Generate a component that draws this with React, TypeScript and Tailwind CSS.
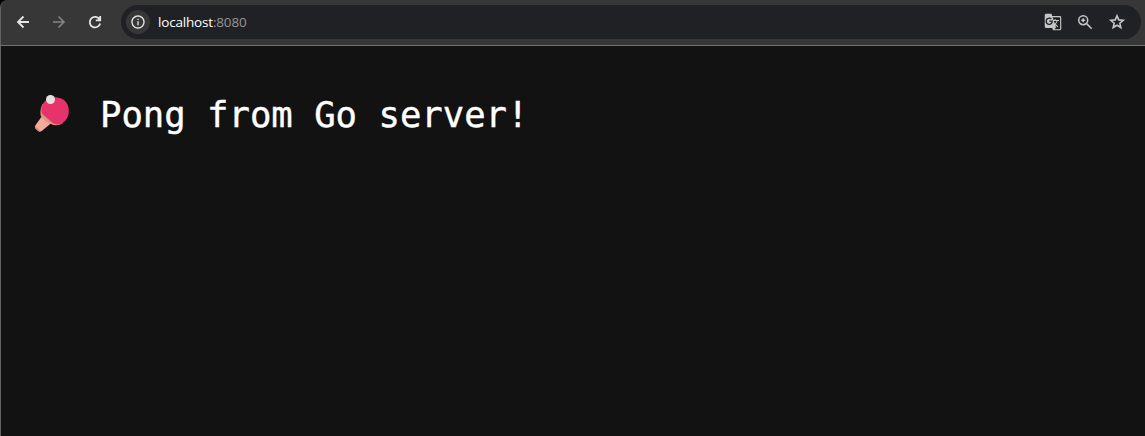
import React from "react";
import { MdGTranslate, MdOutlineInfo } from "react-icons/md";

function Icon({ d, className }: { d: string; className: string }) {
  return (
    <svg viewBox="0 0 18 18" className={`size-[18px] fill-none stroke-current ${className}`} aria-hidden="true">
      <path d={d} />
    </svg>
  );
}

function Paddle() {
  return (
    <svg viewBox="0 0 36 38" className="h-[38px] w-9 shrink-0" aria-hidden="true">
      <path d="M9.500 20 L18 28.500 L8 36.700 Q5.500 38.500 3.500 36.600 L1.500 34.500 Q0 32.500 2 30.500 Z" fill="#f5aa9b" />
      <path d="M1.300 32 L6.800 37.300 Q5 38.300 3.500 36.600 L1.500 34.500 Q0.700 33 1.300 32Z" fill="#cf8f7d" />
      <path d="M8.500 10 Q5.500 16 6.800 22 Q11 28 17 30 Q23 33 29 29 L14 13Z" fill="#dc9683" />
      <path d="M9.500 9 C13 3 23 1 30 6 C36.500 11 36 22 31 27 C26.500 32 20.500 31 17.500 28 L8.800 20.500 C6.500 18 7 13 9.500 9Z" fill="#e7336b" />
      <circle cx="16.500" cy="5.500" r="4.500" fill="#e4e1e3" />
    </svg>
  );
}

export default function App() {
  return (
    <div className="flex h-screen flex-col overflow-hidden bg-black">
      <header className="flex h-[46px] shrink-0 items-center rounded-tl-lg border-b border-l border-[#727272] border-l-[#626262] bg-[#373737] pr-1">
        <nav className="mb-px flex w-[120px] items-center gap-[18px] pl-[13px]">
          <button aria-label="Back"><Icon d="M15 9H4.500M9.500 3.500 4 9l5.500 5.500" className="stroke-[1.800] text-[#e6e6e6]" /></button>
          <button aria-label="Forward"><Icon d="M3 9h10.500M8.500 3.500 14 9l-5.500 5.500" className="stroke-[1.700] text-[#828282]" /></button>
          <button aria-label="Reload"><Icon d="M13.700 6.500A5.300 5.300 0 1 0 14.200 10.500M14.200 3v4.300H9.800" className="stroke-[1.800] text-[#e6e6e6]" /></button>
        </nav>
        <div className="mb-px flex h-[34px] flex-1 items-center rounded-full bg-[#202124] pl-[5px] pr-[15px]">
          <span className="flex size-6 items-center justify-center rounded-full bg-[#373737]">
            <MdOutlineInfo className="size-4 text-[#e8e8e8]" />
          </span>
          <span className="mb-px ml-2 whitespace-pre font-['Open_Sans',sans-serif] text-[13.500px] leading-5 tracking-[-0.180px] text-white">
            localhost<span className="text-[#969696]">:8080</span>
          </span>
          <div className="ml-auto flex items-center gap-[14px] text-[#c6c6c6]">
            <MdGTranslate className="size-[18px]" />
            <Icon d="M11.700 7.200A4.500 4.500 0 1 1 2.700 7.200A4.500 4.500 0 0 1 11.700 7.200M10.400 10.400 15.700 15.700M7.200 5.200v4M5.200 7.200h4" className="stroke-[1.500]" />
            <Icon d="M9 2.800 10.750 6.900 15.200 7.280 11.820 10.200 12.830 14.550 9 12.240 5.170 14.550 6.180 10.200 2.800 7.280 7.250 6.900Z" className="stroke-[1.600]" />
          </div>
        </div>
      </header>
      <main className="flex-1 border-l border-[#626262] bg-[#121212] pl-[33px] pt-12">
        <h1 className="flex items-start gap-[30px] text-white">
          <Paddle />
          <span className="mt-0.5 whitespace-pre font-['DejaVu_Sans_Mono',monospace] text-[35.600px] leading-[38px] [-webkit-text-stroke:0.4px_white]">Pong from Go server!</span>
        </h1>
      </main>
    </div>
  );
}
